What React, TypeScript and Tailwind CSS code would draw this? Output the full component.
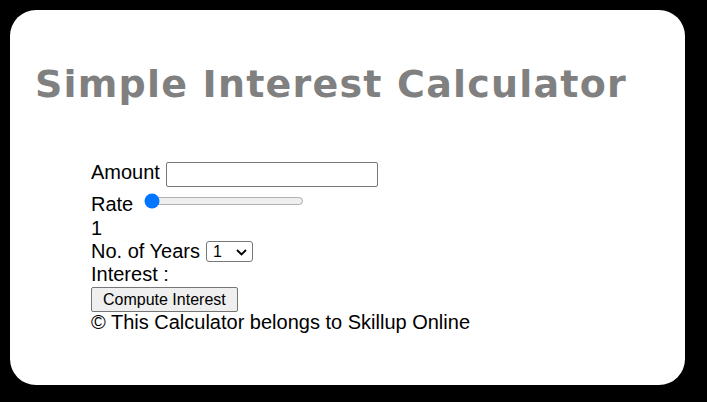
import React from "react";

export default function App() {
  return (
    <div className="w-[707px] h-[402px] bg-black pt-[10px] pl-[10px] overflow-hidden">
      <div className="w-[675px] h-[375px] bg-white rounded-[26px] pt-[52px] pl-[25px] flex flex-col">
        <h1
          className="h-[44px] leading-[44px] text-[38px] tracking-[1.2px] font-bold text-[#808080] whitespace-nowrap"
          style={{ fontFamily: '"DejaVu Sans", Verdana, sans-serif' }}
        >
          Simple Interest Calculator
        </h1>
        <div
          className="mt-[55px] ml-[56px] flex flex-col text-[20px] leading-[23px] text-black"
          style={{ fontFamily: '"Liberation Sans", Arial, sans-serif' }}
        >
          <div className="h-[32px] flex items-start">
            <span>Amount</span>
            <input
              type="text"
              className="ml-[6px] mt-[1px] w-[212px] h-[25px] border border-[#767676] rounded-[2px] bg-white px-[2px] text-[16px] outline-none"
            />
          </div>
          <div className="h-[24px] flex items-start">
            <span>Rate</span>
            <input
              type="range"
              min={1}
              max={20}
              defaultValue={1}
              className="ml-[11px] w-[160px] h-[16px] m-0 accent-[#0075ff]"
            />
          </div>
          <div className="h-[23px]">1</div>
          <div className="h-[23px] flex items-start">
            <span>No. of Years</span>
            <div className="ml-[6px] mt-[1px] w-[47px] h-[21px] border border-[#767676] rounded-[3px] bg-white flex items-center pl-[6px] pr-[5px] text-[16px] leading-[19px]">
              <span className="flex-1">1</span>
              <svg width="11" height="7" viewBox="0 0 11 7" className="mt-[1px]">
                <polyline points="1,1 5.5,5.5 10,1" fill="none" stroke="#000" strokeWidth="1.8" />
              </svg>
            </div>
          </div>
          <div className="h-[24px]">Interest :</div>
          <div className="h-[24px] flex items-start">
            <button className="h-[25px] px-[11px] border border-[#767676] rounded-[2px] bg-[#efefef] text-[16px] leading-[18px] text-black">
              Compute Interest
            </button>
          </div>
          <div className="h-[23px] whitespace-nowrap">© This Calculator belongs to Skillup Online</div>
        </div>
      </div>
    </div>
  );
}
